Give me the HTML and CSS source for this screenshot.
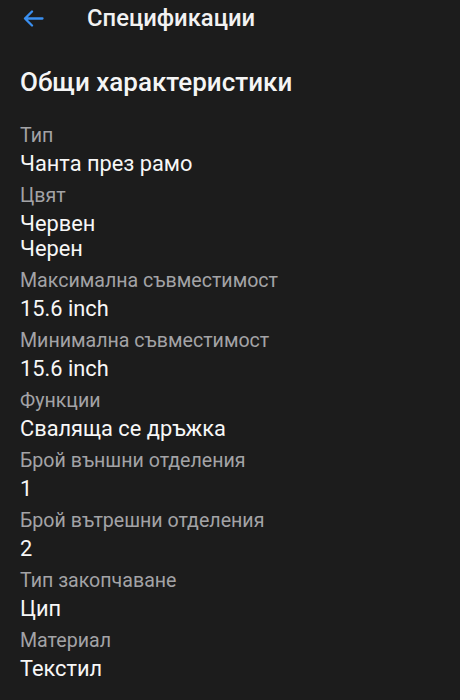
FILE: index.html
```html
<!DOCTYPE html>
<html lang="bg">
<head>
<meta charset="utf-8">
<link rel="stylesheet" href="styles.css">
</head>
<body>
<header class="topbar">
  <svg class="back" width="21" height="17" viewBox="0 0 21 17"><path d="M19.5 8.5H2M9 1.5L2 8.5l7 7" fill="none" stroke="#3a8ff0" stroke-width="2.3" stroke-linecap="round" stroke-linejoin="round"/></svg>
  <span class="title">Спецификации</span>
</header>
<main class="content">
  <h1 class="section">Общи характеристики</h1>
  <dl class="specs">
    <div class="row"><dt>Тип</dt><dd>Чанта през рамо</dd></div>
    <div class="row"><dt>Цвят</dt><dd>Червен</dd><dd>Черен</dd></div>
    <div class="row"><dt>Максимална съвместимост</dt><dd>15.6 inch</dd></div>
    <div class="row"><dt>Минимална съвместимост</dt><dd>15.6 inch</dd></div>
    <div class="row"><dt>Функции</dt><dd>Сваляща се дръжка</dd></div>
    <div class="row"><dt>Брой външни отделения</dt><dd>1</dd></div>
    <div class="row"><dt>Брой вътрешни отделения</dt><dd>2</dd></div>
    <div class="row"><dt>Тип закопчаване</dt><dd>Цип</dd></div>
    <div class="row"><dt>Материал</dt><dd>Текстил</dd></div>
  </dl>
</main>
</body>
</html>
```
FILE: styles.css
```css
html, body {
  margin: 0;
  padding: 0;
  background: #1c1c1c;
  color: #f5f5f5;
  font-family: Roboto, "Noto Sans", sans-serif;
}
.topbar {
  display: flex;
  align-items: center;
  height: 36px;
  padding-left: 23px;
}
.back {
  flex: none;
}
.title {
  margin-left: 43px;
  font-size: 23.8px;
  font-weight: 500;
  color: #f2f2f2;
}
.content {
  padding: 0 20px;
}
.section {
  margin: 28px 0 0;
  font-size: 26px;
  line-height: 36px;
  font-weight: 500;
  color: #f5f5f5;
}
.specs {
  margin: 24px 0 0;
  display: flex;
  flex-direction: column;
  gap: 8px;
}
.row {
  display: flex;
  flex-direction: column;
}
dt {
  font-size: 19.6px;
  line-height: 24px;
  color: #a3a3a6;
  margin-bottom: 3px;
}
dd {
  margin: 0;
  font-size: 21.8px;
  line-height: 25px;
  font-weight: 400;
  color: #f7f7f7;
}
```
